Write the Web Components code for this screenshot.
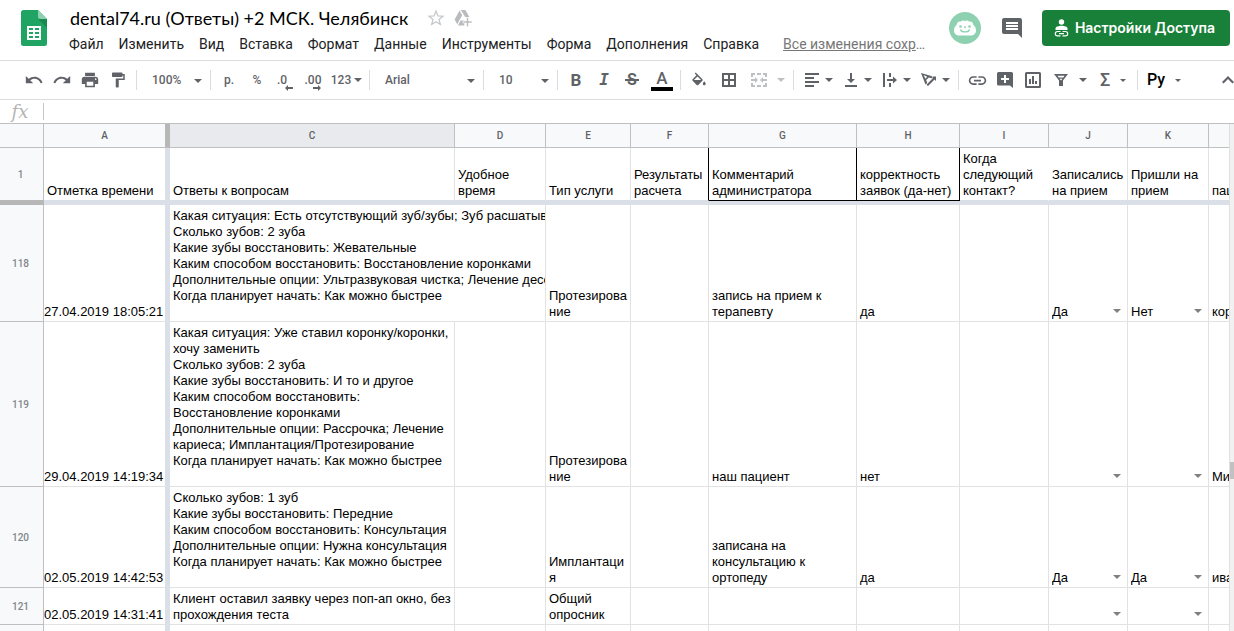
<!DOCTYPE html>
<html lang="ru">
<head>
<meta charset="utf-8">
<title>dental74.ru (Ответы) +2 МСК. Челябинск</title>
<style>
  html, body { margin: 0; height: 100%; background: #fff; overflow: hidden; }
  body { font-family: Roboto, "Liberation Sans", sans-serif; color: #202124; }
</style>
</head>
<body>
<sheets-app></sheets-app>

<template id="t-app">
  <style>
    :host { display: flex; flex-direction: column; height: 100vh; overflow: hidden; }
    sheet-grid { flex: 1; min-height: 0; }
  </style>
  <app-header>
    <doc-title slot="title">dental74.ru (Ответы) +2 МСК. Челябинск</doc-title>
    <menu-item>Файл</menu-item>
    <menu-item>Изменить</menu-item>
    <menu-item>Вид</menu-item>
    <menu-item>Вставка</menu-item>
    <menu-item>Формат</menu-item>
    <menu-item>Данные</menu-item>
    <menu-item>Инструменты</menu-item>
    <menu-item>Форма</menu-item>
    <menu-item>Дополнения</menu-item>
    <menu-item>Справка</menu-item>
    <share-button slot="actions">Настройки Доступа</share-button>
  </app-header>
  <tool-bar></tool-bar>
  <formula-bar></formula-bar>
  <sheet-grid></sheet-grid>
</template>

<template id="t-header">
  <style>
    :host { display: flex; height: 60px; flex: none; border-bottom: 1px solid #dadce0; }
    .logo { width: 62px; box-sizing: border-box; padding: 10px 0 0 21px; flex: none; }
    .logo svg { display: block; }
    .main { flex: 1; min-width: 0; padding-top: 6px; }
    nav { display: flex; align-items: center; gap: 1px; height: 28px; white-space: nowrap; }
    .saved { margin-left: 16px; font-size: 14px; line-height: 20px; color: #777; }
    .saved a { color: inherit; }
    .actions { display: flex; align-items: center; height: 56px; padding-right: 4px; flex: none; }
    .anon { width: 32px; height: 32px; margin-right: 19px; display: block; }
    .comments { border: 0; background: none; padding: 0; width: 24px; height: 24px; margin: 0 18px 0 0; }
    .comments svg { display: block; }
  </style>
  <div class="logo">
    <svg width="26" height="36" viewBox="0 0 26 36" role="img" aria-label="Таблицы">
      <path d="M2.500 0H17l9 9v24.500a2.500 2.500 0 0 1-2.500 2.500h-21A2.500 2.500 0 0 1 0 33.500v-31A2.500 2.500 0 0 1 2.500 0z" fill="#1fa463"/>
      <path d="M17 9h9v9z" fill="#188a50"/>
      <path d="M17 0l9 9h-6.500A2.500 2.500 0 0 1 17 6.500z" fill="#8ed1b1"/>
      <path fill="#fff" fill-rule="evenodd" d="M6 16h14v14H6zM8 18v2h4v-2zM14 18v2h4v-2zM8 22v2h4v-2zM14 22v2h4v-2zM8 26v2h4v-2zM14 26v2h4v-2z"/>
    </svg>
  </div>
  <div class="main">
    <slot name="title"></slot>
    <nav><slot></slot><span class="saved"><a href="#history">Все изменения сохр</a>…</span></nav>
  </div>
  <div class="actions">
    <svg class="anon" viewBox="0 0 32 32" role="img" aria-label="Анонимный пользователь">
      <circle cx="16" cy="16" r="16" fill="#8ed1b1"/>
      <path fill="#fff" d="M10 23.500c-3 0-5-2.300-5-5 0-2.700 1.300-4.600 2.800-6 .2-2 2.200-3.400 4-2.700 1-1.500 3.200-1.600 4.200-.6 1-1 3.200-.9 4.200.6 1.800-.7 3.800.7 4 2.700 1.500 1.400 2.800 3.300 2.800 6 0 2.700-2 5-5 5z"/>
      <circle cx="11.500" cy="14.500" r="1.300" fill="#8ed1b1"/><circle cx="20.500" cy="14.500" r="1.300" fill="#8ed1b1"/>
      <path d="M11.500 17.500c.8 3.200 8.200 3.200 9 0" fill="none" stroke="#8ed1b1" stroke-width="1.400"/>
      <path d="M14.500 14.500h3L16 16.500z" fill="#8ed1b1"/>
    </svg>
    <button class="comments" aria-label="Комментарии">
      <svg width="24" height="24" viewBox="0 0 24 24"><path fill="#5f6368" d="M21.990 4c0-1.100-.89-2-1.990-2H4c-1.100 0-2 .9-2 2v12c0 1.100.9 2 2 2h14l4 4-.01-18zM18 14H6v-2h12v2zm0-3H6V9h12v2zm0-3H6V6h12v2z"/></svg>
    </button>
    <slot name="actions"></slot>
  </div>
</template>

<template id="t-title">
  <style>
    :host { display: flex; align-items: center; height: 24px; padding-left: 8px; }
    h1 { margin: 0; font: 400 18px/24px Lato, sans-serif; color: #000; white-space: nowrap; }
    button { border: 0; background: none; padding: 0; width: 18px; height: 18px; margin-left: 19px; }
    button + button { margin-left: 9px; }
    svg { display: block; }
  </style>
  <h1><slot></slot></h1>
  <button aria-label="Пометить"><svg width="18" height="18" viewBox="0 0 18 18"><path d="M9 2l1.900 4.900 5.100.3-4 3.300 1.300 5L9 12.700l-4.300 2.800 1.300-5-4-3.300 5.100-.3z" fill="none" stroke="#c4c7ca" stroke-width="1.200"/></svg></button>
  <button aria-label="Добавить на Диск"><svg width="18" height="18" viewBox="0 0 18 18" fill="#b9bbbe"><path d="M5.600 1.500L.6 10.500l2.600 4.700 5-9z"/><path d="M6.800 1h4.600l4 7h-4.200z"/><path d="M6.500 11.500h3.800V16.500H4z"/><path d="M12.500 8.500h2V12H18v2h-3.500v3.500h-2V14H9v-2h3.500z" stroke="#fff" stroke-width=".6"/></svg></button>
</template>

<template id="t-menu-item">
  <style>
    :host { display: block; }
    button { border: 0; background: none; padding: 0 7px; font: 400 14px/20px Roboto, sans-serif; color: #202124; }
  </style>
  <button><slot></slot></button>
</template>

<template id="t-share">
  <style>
    :host { display: block; }
    button { display: flex; align-items: center; gap: 6px; height: 36px; padding: 0 15px 0 12px; border: 0; border-radius: 4px; background: #188038; color: #fff; font: 600 14px/20px Inter, sans-serif; white-space: nowrap; }
  </style>
  <button>
    <svg width="15" height="18" viewBox="0 0 15 18"><circle cx="7.500" cy="3" r="2.700" fill="#fff"/><path fill="#fff" d="M1.500 11V9.600C1.500 7.600 4.500 6.700 7.500 6.700s6 .9 6 2.900V11z"/><path fill="none" stroke="#fff" stroke-width="1.200" d="M6.500 12.500h-3a2.200 2.200 0 0 0 0 4.400h3M8.500 12.500h3a2.200 2.200 0 0 1 0 4.400h-3M5 14.700h5"/></svg>
    <span><slot></slot></span>
  </button>
</template>

<template id="t-tool-button">
  <style>
    :host { display: block; width: 28px; }
    :host([drop]) { width: 39px; }
    :host([disabled]) { --tint: #bdc1c6; }
    button { display: flex; align-items: center; width: 100%; height: 30px; padding: 0; border: 0; background: none; color: var(--tint, #5f6368); font: 500 12px/16px Roboto, sans-serif; }
    .face { display: flex; justify-content: center; align-items: center; width: 28px; flex: none; }
    .arrow { display: none; width: 8px; height: 4px; margin-left: -1px; flex: none; }
    :host([drop]) .arrow { display: block; }
    :host([drop="wide"]) .arrow { margin-left: 4px; }
    :host([drop="small"]) .arrow { width: 6px; height: 3px; margin-left: 1px; }
    :host([drop="far"]) .arrow { width: 6px; height: 3px; margin-left: 5px; }
    ::slotted(svg) { display: block; fill: currentColor; flex: none; }
  </style>
  <button><span class="face"><slot></slot></span><svg class="arrow" viewBox="0 0 8 4" fill="currentColor"><path d="M0 0h8L4 4z"/></svg></button>
</template>

<template id="t-tool-select">
  <style>
    :host { display: block; position: relative; width: 73px; }
    select { appearance: none; width: 100%; height: 30px; padding: 0 20px 0 15px; border: 0; background: none; color: #5f6368; font: 500 12px/16px Roboto, sans-serif; }
    svg { position: absolute; right: 8px; top: 14px; pointer-events: none; fill: #5f6368; }
  </style>
  <select></select>
  <svg width="8" height="4" viewBox="0 0 8 4"><path d="M0 0h8L4 4z"/></svg>
</template>

<template id="t-toolbar">
  <style>
    :host { display: flex; align-items: center; height: 38px; flex: none; border-bottom: 1px solid #dadce0; padding-left: 20px; overflow: hidden; }
    hr { width: 1px; height: 20px; margin: 0 4px; border: 0; background: #dadce0; flex: none; }
    hr.tight-left { margin-left: 0; }
    hr.tight-right { margin-right: 0; }
    hr.after-color { margin-left: 2px; }
    tool-button, tool-select { flex: none; }
    .font { width: 113px; }
    .num { width: 38px; }
    .b { font: 700 17px/20px Roboto, sans-serif; }
    .i { font: italic 700 16px/20px "DejaVu Sans Mono", monospace; }
    .s { font: 700 16px/20px Roboto, sans-serif; position: relative; }
    .s::after { content: ""; position: absolute; left: -2px; right: -2px; top: 9px; height: 2px; background: currentColor; }
    .a { font: 500 17px/16px Roboto, sans-serif; padding: 0 5px; height: 17px; border-bottom: 4px solid #000; }
    .color { padding: 0 2px; }
    .sum { font: 500 18px/20px Roboto, sans-serif; }
    .py { font: 500 16px/20px Roboto, sans-serif; color: #000; }
    .dec { display: flex; flex-direction: column; align-items: flex-end; padding-top: 3px; }
    .dec svg { margin-top: -3px; fill: currentColor; }
    .dec.less { padding-right: 6px; }
    .dec.less svg { margin-right: -6px; }
    .end { margin-left: auto; width: 20px; }
    .gap { margin-right: 2px; }
    .merge, .filter, .script { width: 44px; }
    .total { width: 42px; }
  </style>
  <tool-button label="Отменить"><svg width="18" height="18" viewBox="1 1 22 22"><path d="M12.500 8c-2.650 0-5.050.99-6.900 2.600L2 7v9h9l-3.620-3.620c1.390-1.160 3.160-1.880 5.120-1.880 3.540 0 6.550 2.310 7.600 5.500l2.370-.78C21.080 11.030 17.150 8 12.500 8z"/></svg></tool-button>
  <tool-button label="Повторить"><svg width="18" height="18" viewBox="1 1 22 22"><path d="M18.400 10.600C16.550 8.990 14.150 8 11.500 8c-4.650 0-8.580 3.030-9.960 7.220L3.900 16c1.050-3.190 4.050-5.500 7.600-5.500 1.950 0 3.730.72 5.120 1.880L13 16h9V7l-3.600 3.600z"/></svg></tool-button>
  <tool-button label="Печать"><svg width="18" height="18" viewBox="1 1 22 22"><path d="M19 8H5c-1.660 0-3 1.340-3 3v6h4v4h12v-4h4v-6c0-1.660-1.340-3-3-3zm-3 11H8v-5h8v5zm3-7c-.55 0-1-.45-1-1s.45-1 1-1 1 .45 1 1-.45 1-1 1zm-1-9H6v4h12V3z"/></svg></tool-button>
  <tool-button label="Копировать форматирование"><svg width="18" height="18" viewBox="0 0 24 24"><path d="M18 4V3c0-.55-.45-1-1-1H5c-.55 0-1 .45-1 1v4c0 .55.45 1 1 1h12c.55 0 1-.45 1-1V6h1v4H9v11c0 .55.45 1 1 1h2c.55 0 1-.45 1-1v-9h8V4h-3z"/></svg></tool-button>
  <hr class="tight-right">
  <tool-select label="Масштаб" options="100%|75%|50%"></tool-select>
  <hr class="tight-left">
  <tool-button>р.</tool-button>
  <tool-button>%</tool-button>
  <tool-button><span class="dec less">.0<svg width="8" height="6" viewBox="0 0 8 6"><path d="M0 3l3-3v2h5v2H3v2z"/></svg></span></tool-button>
  <tool-button><span class="dec">.00<svg width="8" height="6" viewBox="0 0 8 6"><path d="M8 3L5 0v2H0v2h5v2z"/></svg></span></tool-button>
  <tool-button class="num" drop>123</tool-button>
  <hr class="tight-right">
  <tool-select class="font" label="Шрифт" options="Arial|Roboto|Verdana"></tool-select>
  <hr class="tight-left tight-right">
  <tool-select label="Размер шрифта" options="10|11|12"></tool-select>
  <hr class="tight-left">
  <tool-button><span class="b">B</span></tool-button>
  <tool-button><span class="i">I</span></tool-button>
  <tool-button><span class="s">S</span></tool-button>
  <tool-button class="color"><span class="a">A</span></tool-button>
  <hr class="after-color">
  <tool-button class="gap" label="Цвет заливки"><svg width="18" height="18" viewBox="0 -2 24 24"><path d="M16.560 8.940L7.620 0 6.210 1.410l2.380 2.380-5.150 5.150c-.59.59-.59 1.540 0 2.120l5.500 5.500c.29.29.68.44 1.060.44s.77-.15 1.060-.44l5.500-5.500c.59-.58.59-1.530 0-2.120zM5.210 10L10 5.210 14.790 10H5.210zM19 11.500s-2 2.170-2 3.500c0 1.100.9 2 2 2s2-.9 2-2c0-1.330-2-3.500-2-3.500z"/></svg></tool-button>
  <tool-button class="gap" label="Границы"><svg width="14" height="14" viewBox="0 0 14 14"><path fill-rule="evenodd" d="M0 0h14v14H0zM2 2v4h4V2zM8 2v4h4V2zM2 8v4h4V8zM8 8v4h4V8z"/></svg></tool-button>
  <tool-button class="merge" label="Объединить ячейки" drop="wide" disabled><svg width="16" height="14" viewBox="0 0 16 14"><path d="M0 0h4v2H2v2H0zM6 0h4v2H6zM12 0h4v4h-2V2h-2zM0 10h2v2h2v2H0zM6 12h4v2H6zM14 10h2v4h-4v-2h2zM0 6h4V4l3 3-3 3V8H0zM16 6h-4V4L9 7l3 3V8h4z"/></svg></tool-button>
  <hr>
  <tool-button label="Выравнивание" drop><svg width="14" height="14" viewBox="0 0 14 14"><path d="M0 0h14v2H0zM0 4h9v2H0zM0 8h14v2H0zM0 12h9v2H0z"/></svg></tool-button>
  <tool-button label="По вертикали" drop><svg width="12" height="14" viewBox="0 0 12 14"><path d="M0 12h12v2H0zM5 0h2v6h3l-4 4-4-4h3z"/></svg></tool-button>
  <tool-button label="Перенос текста" drop><svg width="14" height="14" viewBox="0 0 14 14"><path d="M0 0h2v14H0zM6 0h2v4H6zM6 10h2v4H6zM4 6h6V3.500L14 7l-4 3.500V8H4z"/></svg></tool-button>
  <tool-button label="Поворот текста" drop><svg width="16" height="14" viewBox="0 0 16 14"><path fill-rule="evenodd" d="M0 0l12 3.500-1.500 1.700-2.700-.8-2.600 2.700 1 2.800L4.500 11.500zM2.500 2l2 3.700 1.700-2zM15 3.500V8l-1.500-1.500L7 13l-1.500-1.300L12 5l-1.500-1.500z"/></svg></tool-button>
  <hr>
  <tool-button label="Вставить ссылку"><svg width="21" height="21" viewBox="0 0 24 24"><path d="M3.900 12c0-1.710 1.390-3.100 3.100-3.100h4V7H7c-2.760 0-5 2.240-5 5s2.240 5 5 5h4v-1.900H7c-1.710 0-3.100-1.390-3.100-3.100zM8 13h8v-2H8v2zm9-6h-4v1.900h4c1.710 0 3.100 1.390 3.100 3.100s-1.390 3.100-3.100 3.100h-4V17h4c2.760 0 5-2.240 5-5s-2.240-5-5-5z"/></svg></tool-button>
  <tool-button label="Вставить комментарий"><svg width="16" height="16" viewBox="0 0 16 16"><path fill-rule="evenodd" d="M1.500 0h13A1.500 1.500 0 0 1 16 1.500V16l-3-2.500H1.500A1.500 1.500 0 0 1 0 12V1.500A1.500 1.500 0 0 1 1.500 0zM7 3v3H4v2h3v3h2V8h3V6H9V3z"/></svg></tool-button>
  <tool-button label="Вставить диаграмму"><svg width="16" height="16" viewBox="0 0 16 16"><path fill-rule="evenodd" d="M1.500 0h13A1.500 1.500 0 0 1 16 1.500v13a1.500 1.500 0 0 1-1.500 1.500h-13A1.500 1.500 0 0 1 0 14.500v-13A1.500 1.500 0 0 1 1.500 0zM2 2v12h12V2zM4 7h2v5H4zM7 4h2v8H7zM10 9h2v3h-2z"/></svg></tool-button>
  <tool-button class="filter" label="Фильтр" drop="wide"><svg width="14" height="12" viewBox="0 0 14 12"><path fill-rule="evenodd" d="M0 0h14L9 6.500V12H5V6.500zM3.500 1.800l1.200 1.700h4.600l1.200-1.700zM5.500 4.800L7 6.600l1.500-1.800z"/></svg></tool-button>
  <tool-button class="total" drop="small"><span class="sum">Σ</span></tool-button>
  <hr>
  <tool-button class="script" drop="far"><span class="py">Ру</span></tool-button>
  <tool-button class="end" label="Скрыть меню"><svg width="12" height="8" viewBox="0 0 12 8"><path d="M6 0l6 6-1.500 1.500L6 3 1.500 7.500 0 6z"/></svg></tool-button>
</template>

<template id="t-formula">
  <style>
    :host { display: flex; align-items: center; height: 23px; flex: none; }
    label { width: 43px; padding-right: 3px; box-sizing: border-box; text-align: center; font: italic 18px/20px "DejaVu Serif", serif; color: #b4b4b4; }
    input { flex: 1; min-width: 0; height: 17px; box-sizing: border-box; border: 0; border-left: 1px solid #c6c6c6; padding: 0 6px; font: 13px/16px "Liberation Sans", sans-serif; outline: 0; }
  </style>
  <label for="f">fx</label><input id="f" type="text">
</template>

<template id="t-grid">
  <style>
    :host { display: flex; overflow: hidden; border-top: 1px solid #c0c0c0; --line: #e2e2e3; --bar: #dadfe8; --head: #c0c0c0; }
    .view { flex: 1; min-width: 0; overflow: hidden; border-right: 1px solid #e0e0e0; }
    table { width: 100%; table-layout: fixed; border-collapse: separate; border-spacing: 0; font: 13px/16px "Liberation Sans", sans-serif; color: #000; }
    td, th { box-sizing: border-box; padding: 0; border: 0 solid var(--line); border-width: 0 1px 1px 0; overflow: hidden; }
    th { background: #f8f9fa; border-color: var(--head); font: 500 10px/14px Roboto, sans-serif; color: #5f6368; text-align: center; vertical-align: middle; }
    tbody th { color: #80868b; padding: 2px 2px 0 0; }
    thead th { height: 24px; }
    thead th.on { background: #e8eaed; }
    td { padding: 3px 3px 1px; vertical-align: bottom; white-space: pre; }
    td.top { vertical-align: top; }
    td.date { padding-left: 0; padding-right: 2px; text-align: right; }
    td.pick { padding-left: 0; padding-right: 0; }
    td.open { border-right-color: transparent; }
    td.ink-right { border-right-color: #000; }
    td.ink-bottom { border-bottom-color: #000; }
    .frozen td:not(.ink-bottom) { border-bottom-color: var(--bar); }
    .frozen th { border-bottom-color: #b7b7b7; }
    tr > :nth-child(2) { border-right: 5px solid var(--bar); }
    thead tr > :nth-child(2) { border-right-color: #b7b7b7; }
    thead th:last-child, td:last-child { border-right: 0; padding-right: 0; }
    .bar td { height: 4px; padding: 0; border: 0; background: var(--bar); line-height: 0; }
    .bar th { height: 4px; padding: 0; border: 0; background: #b7b7b7; line-height: 0; }
    .scroll { width: 4px; flex: none; display: flex; flex-direction: column; background: #f1f1f1; }
    .scroll i { flex: 338; }
    .scroll b { flex: 17; background: #c1c1c1; }
    .scroll u { flex: 152; }
  </style>
  <div class="view"><table>
    <colgroup></colgroup><thead></thead><tbody></tbody>
  </table></div>
  <div class="scroll"><i></i><b></b><u></u></div>
</template>

<template id="t-pick">
  <style>
    :host { display: block; position: relative; height: 16px; white-space: normal; }
    select { display: block; appearance: none; width: 100%; height: 16px; padding: 0 16px 0 3px; border: 0; background: none; font: 13px/16px "Liberation Sans", sans-serif; color: #000; }
    svg { position: absolute; right: 6px; top: 5px; fill: #808080; pointer-events: none; }
  </style>
  <select><option value=""></option><option>Да</option><option>Нет</option></select>
  <svg width="8" height="4" viewBox="0 0 8 4"><path d="M0 0h8L4 4z"/></svg>
</template>

<script>
  class Base extends HTMLElement {
    constructor() {
      super();
      const root = this.attachShadow({ mode: "open" });
      root.append(document.getElementById(this.constructor.tpl).content.cloneNode(true));
    }
  }
  const simple = (name, tpl) => customElements.define(name, class extends Base { static tpl = tpl; });

  class ToolButton extends Base {
    static tpl = "t-tool-button";
    connectedCallback() {
      const label = this.getAttribute("label");
      if (label) this.shadowRoot.querySelector("button").setAttribute("aria-label", label);
    }
  }

  class ToolSelect extends Base {
    static tpl = "t-tool-select";
    connectedCallback() {
      const select = this.shadowRoot.querySelector("select");
      select.setAttribute("aria-label", this.getAttribute("label"));
      for (const text of this.getAttribute("options").split("|")) select.add(new Option(text));
    }
  }

  class CellPick extends Base {
    static tpl = "t-pick";
    connectedCallback() {
      const select = this.shadowRoot.querySelector("select");
      select.setAttribute("aria-label", this.getAttribute("label"));
      select.value = this.getAttribute("value") || "";
    }
  }

  const COLUMNS = [["", 44], ["A", 126], ["C", 285], ["D", 91], ["E", 85], ["F", 78], ["G", 148], ["H", 103], ["I", 89], ["J", 79], ["K", 81], ["", 0]];
  const ROWS = [
    { n: "1", h: 53, frozen: true, cells: ["Отметка времени", "Ответы к вопросам", "Удобное\nвремя", "Тип услуги",
      { t: "Результаты\nрасчета", c: "ink-right" }, { t: "Комментарий\nадминистратора", c: "ink-right ink-bottom" },
      { t: "корректность\nзаявок (да-нет)", c: "ink-right ink-bottom" }, { t: "Когда\nследующий\nконтакт?", c: "open" },
      "Записались\nна прием", "Пришли на\nприем", "пац"] },
    { n: "118", h: 117, cells: [{ t: "27.04.2019 18:05:21", c: "date" },
      { t: "Какая ситуация: Есть отсутствующий зуб/зубы; Зуб расшатыв\nСколько зубов: 2 зуба\nКакие зубы восстановить: Жевательные\nКаким способом восстановить: Восстановление коронками\nДополнительные опции: Ультразвуковая чистка; Лечение десе\nКогда планирует начать: Как можно быстрее", c: "top", span: 2 },
      "Протезирова\nние", "", "запись на прием к\nтерапевту", "да", "", { pick: "Да" }, { pick: "Нет" }, "кор"] },
    { n: "119", h: 165, cells: [{ t: "29.04.2019 14:19:34", c: "date" },
      { t: "Какая ситуация: Уже ставил коронку/коронки,\nхочу заменить\nСколько зубов: 2 зуба\nКакие зубы восстановить: И то и другое\nКаким способом восстановить:\nВосстановление коронками\nДополнительные опции: Рассрочка; Лечение\nкариеса; Имплантация/Протезирование\nКогда планирует начать: Как можно быстрее", c: "top" },
      "", "Протезирова\nние", "", "наш пациент", "нет", "", { pick: "" }, { pick: "" }, "Ми"] },
    { n: "120", h: 101, cells: [{ t: "02.05.2019 14:42:53", c: "date" },
      { t: "Сколько зубов: 1 зуб\nКакие зубы восстановить: Передние\nКаким способом восстановить: Консультация\nДополнительные опции: Нужна консультация\nКогда планирует начать: Как можно быстрее", c: "top" },
      "", "Имплантаци\nя", "", "записана на\nконсультацию к\nортопеду", "да", "", { pick: "Да" }, { pick: "Да" }, "ива"] },
    { n: "121", h: 37, cells: [{ t: "02.05.2019 14:31:41", c: "date" },
      { t: "Клиент оставил заявку через поп-ап окно, без\nпрохождения теста", c: "top" },
      "", "Общий\nопросник", "", "", "", "", { pick: "" }, { pick: "" }, ""] },
    { n: "", h: 37, cells: ["", "", "", "", "", "", "", "", "", "", ""] }
  ];

  class SheetGrid extends Base {
    static tpl = "t-grid";
    connectedCallback() {
      const root = this.shadowRoot;
      const make = (tag, parent, text = "") => {
        const el = document.createElement(tag);
        el.textContent = text;
        parent.append(el);
        return el;
      };
      const head = make("tr", root.querySelector("thead"));
      for (const [name, width] of COLUMNS) {
        const col = make("col", root.querySelector("colgroup"));
        if (width) col.style.width = width + "px";
        const th = make("th", head, name);
        if (name === "C") th.className = "on";
      }
      const body = root.querySelector("tbody");
      for (const row of ROWS) {
        const tr = make("tr", body);
        tr.style.height = row.h + "px";
        if (row.frozen) tr.className = "frozen";
        make("th", tr, row.n);
        for (const cell of row.cells) {
          const data = typeof cell === "string" ? { t: cell } : cell;
          const td = make("td", tr, data.t);
          if (data.c) td.className = data.c;
          if (data.span) td.colSpan = data.span;
          if ("pick" in data) {
            td.className = "pick";
            const pick = document.createElement("cell-pick");
            pick.setAttribute("value", data.pick);
            pick.setAttribute("label", "Строка " + row.n);
            td.append(pick);
          }
        }
        if (row.frozen) {
          const bar = make("tr", body);
          bar.className = "bar";
          make("th", bar);
          make("td", bar).colSpan = COLUMNS.length - 1;
        }
      }
    }
  }

  simple("doc-title", "t-title");
  simple("menu-item", "t-menu-item");
  simple("share-button", "t-share");
  simple("app-header", "t-header");
  customElements.define("tool-button", ToolButton);
  customElements.define("tool-select", ToolSelect);
  customElements.define("cell-pick", CellPick);
  simple("tool-bar", "t-toolbar");
  simple("formula-bar", "t-formula");
  customElements.define("sheet-grid", SheetGrid);
  simple("sheets-app", "t-app");
</script>
</body>
</html>
